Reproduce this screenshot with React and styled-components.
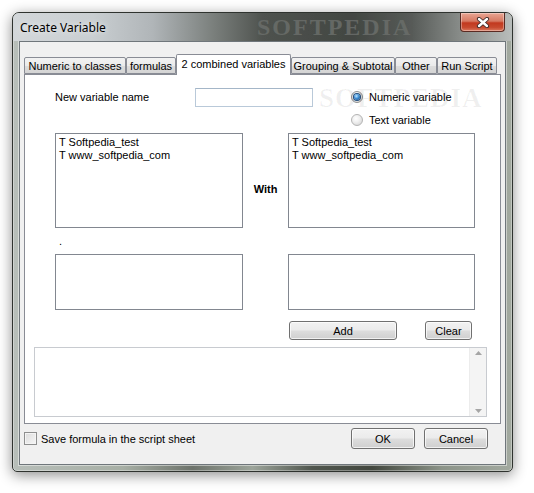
import React from 'react';
import styled, { createGlobalStyle } from 'styled-components';

const GlobalStyle = createGlobalStyle`
  html, body {
    margin: 0;
    padding: 0;
    background: #ffffff;
  }
  body {
    font-family: "Liberation Sans", Arial, sans-serif;
    font-size: 11px;
    color: #000;
  }
`;

const Page = styled.div`
  width: 534px;
  height: 493px;
  box-sizing: border-box;
  padding: 12px 0 0 12px;
  overflow: hidden;
`;

const Window = styled.div`
  display: flex;
  flex-direction: column;
  width: 501px;
  height: 460px;
  box-sizing: border-box;
  padding: 0 6px 6px 6px;
  border: 1px solid #2f332f;
  border-radius: 7px 7px 5px 5px;
  background: linear-gradient(90deg, #b7beb9 0%, #a7afa5 22%, #6d736b 36%, #9ca49a 48%, #50564e 60%, #43483f 72%, #8c9489 86%, #a2a99f 100%);
  box-shadow: 0 3px 14px rgba(0, 0, 0, 0.45), inset 0 0 0 1px rgba(255, 255, 255, 0.35);
`;

const TitleBar = styled.div`
  position: relative;
  display: flex;
  align-items: flex-start;
  height: 28px;
  margin: 0 -6px;
  padding-left: 7px;
  border-radius: 6px 6px 0 0;
  background: linear-gradient(90deg, #d3d7da 0%, #c9ced1 16%, #b0b5b8 28%, #7b807d 40%, #4f534f 50%, #434743 68%, #575b58 80%, #8a8e8b 90%, #b9bdbb 100%);
  overflow: hidden;
`;

const Title = styled.div`
  align-self: center;
  font-family: "Segoe UI", "Noto Sans", "Liberation Sans", sans-serif;
  font-size: 12px;
  color: #000;
  text-shadow: 0 0 6px rgba(255, 255, 255, 0.9);
  flex: 1;
`;

const TitleMark = styled.div`
  position: absolute;
  left: 244px;
  top: 1px;
  font-family: "Liberation Serif", serif;
  font-weight: bold;
  font-size: 24px;
  line-height: 26px;
  letter-spacing: 2px;
  color: #6a6e6a;
  opacity: 0.85;
  pointer-events: none;
`;

const CloseButton = styled.div`
  display: flex;
  align-items: center;
  justify-content: center;
  width: 45px;
  height: 19px;
  margin-right: 7px;
  box-sizing: border-box;
  border: 1px solid #5a2a22;
  border-top: none;
  border-radius: 0 0 4px 4px;
  background: linear-gradient(180deg, #e9a593 0%, #d67a63 45%, #c2391f 55%, #c74a2f 80%, #dc7a5f 100%);
  box-shadow: inset 0 0 0 1px rgba(255, 255, 255, 0.35);
`;

const Client = styled.div`
  flex: 1;
  display: flex;
  flex-direction: column;
  box-sizing: border-box;
  padding: 12px 4px 0 4px;
  background: #f0f0f0;
  border: 1px solid #6f767b;
  box-shadow: 0 0 0 1px rgba(255, 255, 255, 0.45);
`;

const TabRow = styled.div`
  display: flex;
  align-items: flex-end;
  height: 20px;
`;

const Tab = styled.div`
  position: relative;
  display: flex;
  align-items: center;
  justify-content: center;
  width: ${p => p.w}px;
  height: ${p => (p.active ? 21 : 17)}px;
  margin-bottom: ${p => (p.active ? -1 : 0)}px;
  box-sizing: border-box;
  padding-bottom: ${p => (p.active ? 3 : 0)}px;
  border: 1px solid #898c95;
  border-bottom: ${p => (p.active ? 'none' : '1px solid #898c95')};
  border-radius: 2px 2px 0 0;
  background: ${p => (p.active ? '#ffffff' : 'linear-gradient(180deg, #f2f2f2 0%, #ebebeb 50%, #dddddd 51%, #d4d4d4 100%)')};
  z-index: ${p => (p.active ? 2 : 1)};
  white-space: nowrap;
`;

const Panel = styled.div`
  position: relative;
  display: flex;
  flex-direction: column;
  height: 350px;
  box-sizing: border-box;
  padding-left: 9px;
  border: 1px solid #898c95;
  background: #ffffff;
`;

const Section = styled.div`
  display: flex;
  flex-direction: column;
  padding: 13px 0 0 21px;
`;

const HeaderRow = styled.div`
  display: flex;
  align-items: flex-start;
`;

const NameLabel = styled.div`
  width: 140px;
  line-height: 19px;
`;

const NameInput = styled.div`
  width: 118px;
  height: 19px;
  box-sizing: border-box;
  border: 1px solid #b9c9d9;
  border-top-color: #a4b6c8;
  background: #fff;
`;

const RadioGroup = styled.div`
  display: flex;
  flex-direction: column;
  gap: 10px;
  margin-left: 38px;
  padding-top: 2px;
`;

const RadioItem = styled.div`
  display: flex;
  align-items: center;
  height: 13px;
  gap: 6px;
`;

const RadioCircle = styled.div`
  display: flex;
  align-items: center;
  justify-content: center;
  width: 12px;
  height: 12px;
  box-sizing: border-box;
  border: 1px solid ${p => (p.faded ? '#b4b4b4' : '#8e8f8f')};
  border-radius: 50%;
  background: radial-gradient(circle at 40% 35%, #ffffff 0%, #f0f0f0 40%, #cfcfcf 100%);
`;

const RadioDot = styled.div`
  width: 6px;
  height: 6px;
  border-radius: 50%;
  background: radial-gradient(circle at 40% 35%, #bfe6ff 0%, #3d8ed4 45%, #0f3f7a 100%);
  box-shadow: 0 0 0 1px #224e7e;
`;

const ListGrid = styled.div`
  display: grid;
  grid-template-columns: 188px 45px 187px;
  height: ${p => p.h}px;
  margin-top: ${p => p.mt}px;
`;

const ListBox = styled.div`
  box-sizing: border-box;
  padding: 2px 3px;
  border: 1px solid #828790;
  background: #fff;
  line-height: 13px;
  white-space: nowrap;
  overflow: hidden;
`;

const WithLabel = styled.div`
  margin-top: 50px;
  text-align: center;
  font-weight: bold;
  line-height: 13px;
`;

const DotLabel = styled.div`
  margin-top: 7px;
  padding-left: 4px;
  height: 13px;
  line-height: 13px;
`;

const ButtonRow = styled.div`
  display: flex;
  gap: 28px;
  margin-top: 11px;
  padding-left: 234px;
`;

const Button = styled.div`
  display: flex;
  align-items: center;
  justify-content: center;
  width: ${p => p.w}px;
  height: ${p => p.h || 19}px;
  box-sizing: border-box;
  border: 1px solid #707070;
  border-radius: 3px;
  background: linear-gradient(180deg, #f2f2f2 0%, #ebebeb 48%, #dddddd 52%, #cfcfcf 100%);
  box-shadow: inset 0 0 0 1px rgba(255, 255, 255, 0.7);
`;

const ScriptBox = styled.div`
  display: flex;
  width: 453px;
  height: 70px;
  margin-top: 7px;
  box-sizing: border-box;
  border: 1px solid #c8cbd0;
  background: #fff;
`;

const ScriptText = styled.div`
  flex: 1;
`;

const ScrollBar = styled.div`
  display: flex;
  flex-direction: column;
  justify-content: space-between;
  align-items: center;
  width: 17px;
  padding: 3px 0;
  box-sizing: border-box;
  background: #f4f4f4;
  border-left: 1px solid #ececec;
`;

const PanelMark = styled.div`
  position: absolute;
  left: 294px;
  top: 8px;
  font-family: "Liberation Serif", serif;
  font-weight: bold;
  font-size: 27px;
  letter-spacing: 1px;
  color: rgba(0, 0, 0, 0.06);
  pointer-events: none;
`;

const Footer = styled.div`
  display: flex;
  align-items: center;
  height: 21px;
  margin-top: 4px;
  padding-right: 13px;
`;

const CheckBox = styled.div`
  width: 13px;
  height: 13px;
  box-sizing: border-box;
  border: 1px solid #8e8f8f;
  background: linear-gradient(135deg, #dcdcdc 0%, #f6f6f6 100%);
  box-shadow: inset 0 0 0 1px #f4f4f4;
`;

const CheckLabel = styled.div`
  flex: 1;
  margin-left: 4px;
`;

const FooterButtons = styled.div`
  display: flex;
  gap: 9px;
`;

const CloseGlyph = () => (
  <svg width="14" height="11" viewBox="0 0 14 11">
    <path d="M3 2 L11 9 M11 2 L3 9" stroke="#3d2a28" strokeWidth="4.2" strokeLinecap="round" />
    <path d="M3 2 L11 9 M11 2 L3 9" stroke="#ffffff" strokeWidth="2.4" strokeLinecap="round" />
  </svg>
);

const Arrow = ({ down }) => (
  <svg width="7" height="4" viewBox="0 0 7 4">
    <path d={down ? 'M0 0 L7 0 L3.5 4 Z' : 'M0 4 L7 4 L3.5 0 Z'} fill="#a5a5a5" />
  </svg>
);

const tabs = [
  { label: 'Numeric to classes', w: 102 },
  { label: 'formulas', w: 50 },
  { label: '2 combined variables', w: 115, active: true },
  { label: 'Grouping & Subtotal', w: 104 },
  { label: 'Other', w: 42 },
  { label: 'Run Script', w: 60 },
];

const variables = ['T Softpedia_test', 'T www_softpedia_com'];

export default function App() {
  return (
    <>
      <GlobalStyle />
      <Page>
        <Window>
          <TitleBar>
            <Title>Create Variable</Title>
            <TitleMark>SOFTPEDIA</TitleMark>
            <CloseButton>
              <CloseGlyph />
            </CloseButton>
          </TitleBar>
          <Client>
            <TabRow>
              {tabs.map(t => (
                <Tab key={t.label} w={t.w} active={t.active}>{t.label}</Tab>
              ))}
            </TabRow>
            <Panel>
              <PanelMark>SOFTPEDIA</PanelMark>
              <Section>
                <HeaderRow>
                  <NameLabel>New variable name</NameLabel>
                  <NameInput />
                  <RadioGroup>
                    <RadioItem>
                      <RadioCircle><RadioDot /></RadioCircle>
                      Numeric variable
                    </RadioItem>
                    <RadioItem>
                      <RadioCircle faded />
                      Text variable
                    </RadioItem>
                  </RadioGroup>
                </HeaderRow>
                <ListGrid h={95} mt={7}>
                  <ListBox>
                    {variables.map(v => <div key={v}>{v}</div>)}
                  </ListBox>
                  <WithLabel>With</WithLabel>
                  <ListBox>
                    {variables.map(v => <div key={v}>{v}</div>)}
                  </ListBox>
                </ListGrid>
                <DotLabel>.</DotLabel>
                <ListGrid h={56} mt={6}>
                  <ListBox />
                  <div />
                  <ListBox />
                </ListGrid>
                <ButtonRow>
                  <Button w={108}>Add</Button>
                  <Button w={47}>Clear</Button>
                </ButtonRow>
              </Section>
              <ScriptBox>
                <ScriptText />
                <ScrollBar>
                  <Arrow />
                  <Arrow down />
                </ScrollBar>
              </ScriptBox>
            </Panel>
            <Footer>
              <CheckBox />
              <CheckLabel>Save formula in the script sheet</CheckLabel>
              <FooterButtons>
                <Button w={64} h={21}>OK</Button>
                <Button w={64} h={21}>Cancel</Button>
              </FooterButtons>
            </Footer>
          </Client>
        </Window>
      </Page>
    </>
  );
}
